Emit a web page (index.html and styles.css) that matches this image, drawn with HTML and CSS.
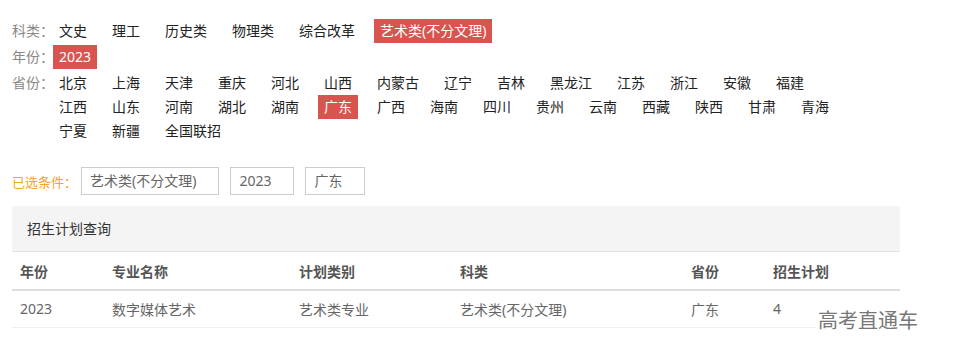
FILE: index.html
```html
<!DOCTYPE html>
<html lang="zh">
<head>
<meta charset="utf-8">
<link rel="stylesheet" href="styles.css">
</head>
<body>
<div class="page">
  <div class="filters">
    <div class="group">
      <span class="label">科类：</span>
      <div class="items">
        <a class="item">文史</a><a class="item">理工</a><a class="item">历史类</a><a class="item">物理类</a><a class="item">综合改革</a><a class="item active">艺术类(不分文理)</a>
      </div>
    </div>
    <div class="group">
      <span class="label">年份：</span>
      <div class="items">
        <a class="item active">2023</a>
      </div>
    </div>
    <div class="group">
      <span class="label">省份：</span>
      <div class="items">
        <a class="item">北京</a><a class="item">上海</a><a class="item">天津</a><a class="item">重庆</a><a class="item">河北</a><a class="item">山西</a><a class="item">内蒙古</a><a class="item">辽宁</a><a class="item">吉林</a><a class="item">黑龙江</a><a class="item">江苏</a><a class="item">浙江</a><a class="item">安徽</a><a class="item">福建</a><a class="item">江西</a><a class="item">山东</a><a class="item">河南</a><a class="item">湖北</a><a class="item">湖南</a><a class="item active">广东</a><a class="item">广西</a><a class="item">海南</a><a class="item">四川</a><a class="item">贵州</a><a class="item">云南</a><a class="item">西藏</a><a class="item">陕西</a><a class="item">甘肃</a><a class="item">青海</a><a class="item">宁夏</a><a class="item">新疆</a><a class="item">全国联招</a>
      </div>
    </div>
  </div>

  <div class="selected">
    <span class="sel-label">已选条件：</span>
    <span class="tag">艺术类(不分文理)</span>
    <span class="tag">2023</span>
    <span class="tag">广东</span>
  </div>

  <div class="panel">
    <div class="panel-head">招生计划查询</div>
    <table class="plan">
      <thead>
        <tr><th class="c1">年份</th><th class="c2">专业名称</th><th class="c3">计划类别</th><th class="c4">科类</th><th class="c5">省份</th><th class="c6">招生计划</th></tr>
      </thead>
      <tbody>
        <tr><td>2023</td><td>数字媒体艺术</td><td>艺术类专业</td><td>艺术类(不分文理)</td><td>广东</td><td>4</td></tr>
      </tbody>
    </table>
  </div>

  <div class="watermark">高考直通车</div>
</div>
</body>
</html>
```

FILE: styles.css
```css
* { box-sizing: border-box; }
html, body { margin: 0; padding: 0; background: #fff; }
body {
  font-family: "Noto Sans", "Noto Sans CJK SC", sans-serif;
  font-size: 14px;
  color: #333;
}
.page {
  position: relative;
  width: 955px;
  height: 362px;
  padding: 19px 0 0 12px;
}
.group {
  display: flex;
  align-items: flex-start;
  margin-bottom: 2px;
}
.label {
  width: 41px;
  flex: none;
  height: 24px;
  line-height: 24px;
  color: #888;
  font-size: 14px;
  white-space: nowrap;
}
.items {
  display: flex;
  flex-wrap: wrap;
  width: 800px;
}
.item {
  display: block;
  height: 24px;
  line-height: 24px;
  padding: 0 6px;
  margin-right: 13px;
  color: #222;
  white-space: nowrap;
}
.item.active {
  background: #d9534f;
  color: #fff;
}
.selected {
  display: flex;
  align-items: center;
  gap: 11px;
  margin-top: 24px;
}
.sel-label {
  width: 58px;
  flex: none;
  white-space: nowrap;
  color: #f5a623;
  font-size: 13px;
}
.tag {
  height: 28px;
  line-height: 26px;
  border: 1px solid #ccc;
  padding: 0 22px 0 8px;
  color: #666;
}
.panel {
  width: 888px;
  margin-top: 11px;
}
.panel-head {
  height: 46px;
  line-height: 46px;
  background: #f4f4f4;
  padding-left: 15px;
  color: #333;
  border-bottom: 1px solid #e2e2e2;
}
.plan {
  width: 100%;
  border-collapse: collapse;
  table-layout: fixed;
}
.plan th, .plan td {
  text-align: left;
  padding: 0 8px;
  color: #666;
}
.plan th {
  height: 38px;
  font-weight: bold;
  font-size: 14px;
  color: #555;
  border-bottom: 2px solid #ddd;
}
.plan td {
  height: 37px;
  border-bottom: 1px solid #eee;
}
.c1 { width: 92px; }
.c2 { width: 187px; }
.c3 { width: 161px; }
.c4 { width: 231px; }
.c5 { width: 82px; }
.c6 { width: 135px; }
.watermark {
  position: absolute;
  left: 816px;
  top: 305px;
  font-size: 20px;
  color: #777;
  background: #fff;
  padding: 0 2px;
}
```
